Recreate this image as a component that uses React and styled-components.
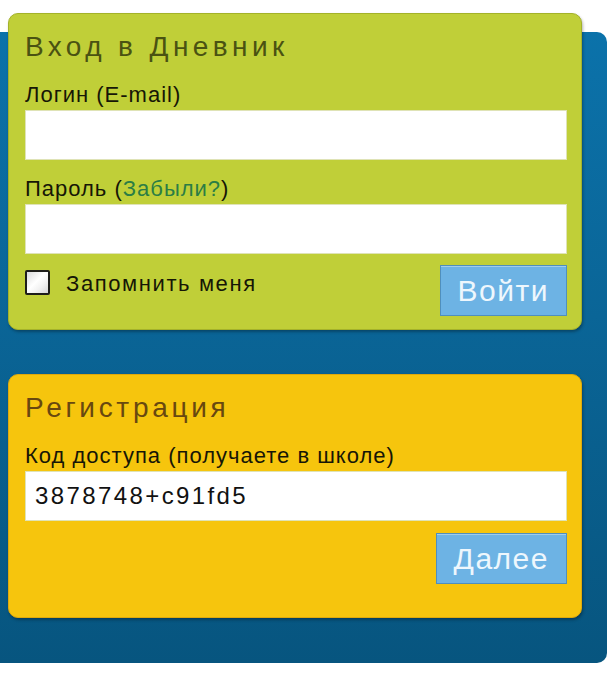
import React from "react";
import styled, { createGlobalStyle } from "styled-components";

const GlobalStyle = createGlobalStyle`
  body {
    margin: 0;
    background: #ffffff;
    font-family: "Liberation Sans", Arial, sans-serif;
  }
`;

const Page = styled.div`
  padding-top: 32px;
`;

const Panel = styled.div`
  width: 607px;
  box-sizing: border-box;
  padding: 0 25px 45px 8px;
  border-radius: 0 10px 10px 0;
  background: linear-gradient(180deg, #0b72aa 0%, #0a6597 45%, #07557f 100%);
  display: flex;
  flex-direction: column;
  gap: 44px;
`;

const Card = styled.form`
  display: flex;
  flex-direction: column;
  box-sizing: border-box;
  width: 574px;
  margin-top: ${(p) => p.$lift || 0}px;
  padding: 17px 14px ${(p) => p.$bottom}px 16px;
  border: 1px solid ${(p) => p.$edge};
  border-radius: 10px;
  background: ${(p) => p.$bg};
  box-shadow: 1px 2px 3px rgba(0, 0, 0, 0.3);
`;

const Title = styled.h2`
  margin: 0 0 3px;
  font-family: "Liberation Sans", Arial, sans-serif;
  font-weight: normal;
  font-size: 28px;
  line-height: 32px;
  letter-spacing: ${(p) => p.$spacing}px;
  color: ${(p) => p.$color};
`;

const Label = styled.label`
  display: block;
  margin: 16px 0 2px;
  font-size: 22px;
  line-height: 26px;
  letter-spacing: 1px;
  color: #161606;
`;

const Link = styled.a`
  color: #2b7d45;
  text-decoration: none;
`;

const Field = styled.input`
  display: block;
  box-sizing: border-box;
  width: 100%;
  height: 50px;
  margin: 0;
  padding: 0 9px;
  border: 1px solid #dfe3b6;
  background: #ffffff;
  font-family: "Liberation Sans", Arial, sans-serif;
  font-size: 24px;
  letter-spacing: 2.4px;
  color: #111111;
  outline: none;
`;

const Actions = styled.div`
  display: flex;
  justify-content: ${(p) => (p.$end ? "flex-end" : "space-between")};
  align-items: flex-start;
  margin-top: ${(p) => p.$top}px;
`;

const Remember = styled.label`
  display: flex;
  align-items: center;
  gap: 16px;
  height: 25px;
  margin-top: 5px;
`;

const Check = styled.input.attrs({ type: "checkbox" })`
  appearance: none;
  box-sizing: border-box;
  width: 25px;
  height: 25px;
  margin: 0;
  border: 2px solid #1e1e1a;
  border-radius: 2px;
  background: linear-gradient(135deg, #dcdcdc 0%, #ffffff 45%, #f0f0f0 70%, #d6d6d6 100%);
`;

const RememberText = styled.span`
  padding-top: 3px;
  font-size: 22px;
  letter-spacing: 1.6px;
  color: #161606;
`;

const Button = styled.button`
  box-sizing: border-box;
  height: 51px;
  padding: 0 17px;
  border: 1px solid #4f8fbd;
  background: #6db3e4;
  box-shadow: inset 0 1px 0 rgba(255, 255, 255, 0.35);
  font-family: "Liberation Sans", Arial, sans-serif;
  font-size: 30px;
  letter-spacing: 1.5px;
  color: #eef7fd;
  cursor: pointer;
`;

export default function App() {
  return (
    <Page>
      <GlobalStyle />
      <Panel>
        <Card $lift={-19} $bottom={13} $bg="#c0cf38" $edge="#a4b22a">
          <Title $color="#4a5212" $spacing={4.4}>Вход в Дневник</Title>
          <Label htmlFor="login">Логин (E-mail)</Label>
          <Field id="login" type="text" />
          <Label htmlFor="password">
            Пароль (<Link href="#">Забыли?</Link>)
          </Label>
          <Field id="password" type="password" />
          <Actions $top={11}>
            <Remember>
              <Check />
              <RememberText>Запомнить меня</RememberText>
            </Remember>
            <Button type="button">Войти</Button>
          </Actions>
        </Card>

        <Card $bottom={33} $bg="#f6c50d" $edge="#dfa90c">
          <Title $color="#684810" $spacing={3.7}>Регистрация</Title>
          <Label htmlFor="code">Код доступа (получаете в школе)</Label>
          <Field id="code" type="text" defaultValue="3878748+c91fd5" />
          <Actions $top={12} $end>
            <Button type="button">Далее</Button>
          </Actions>
        </Card>
      </Panel>
    </Page>
  );
}
